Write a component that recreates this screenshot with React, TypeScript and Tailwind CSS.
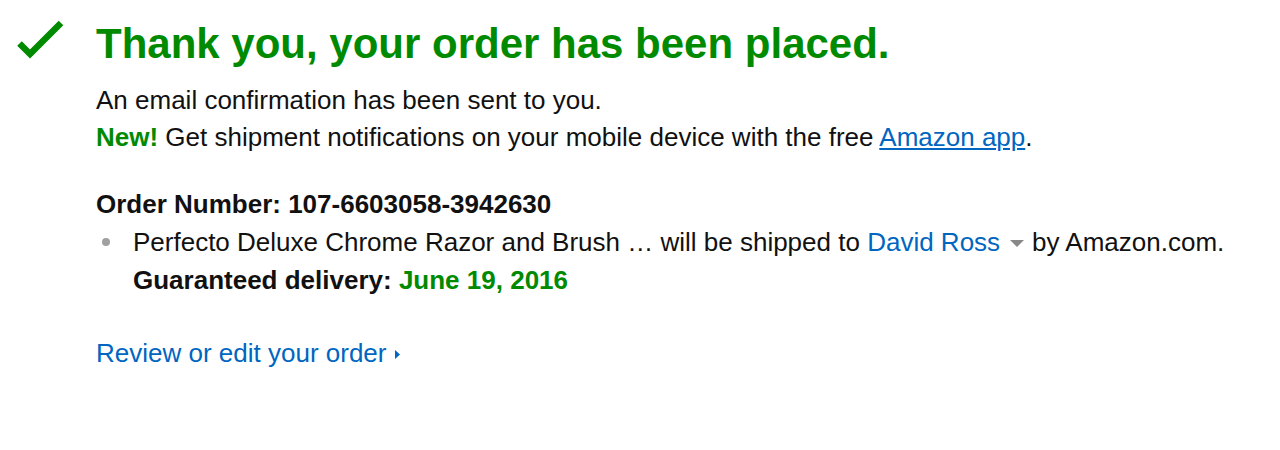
import React from "react";

export default function App() {
  return (
    <div className="w-[1280px] h-[450px] bg-white text-[#111111]" style={{ fontFamily: '"Liberation Sans", Arial, sans-serif' }}>
      <div className="flex pt-[18px] pl-[16px]">
        <div className="w-[80px] shrink-0">
          <svg width="50" height="44" viewBox="0 0 50 44">
            <path d="M3.5 25.5 L14 36 L45 5" fill="none" stroke="#008a00" strokeWidth="6.5" />
          </svg>
        </div>
        <div className="flex flex-col">
          <h1 className="text-[42px] leading-[52px] font-bold text-[#008a00] whitespace-nowrap">Thank you, your order has been placed.</h1>
          <p className="text-[26px] leading-[37px] mt-[12px] whitespace-nowrap">An email confirmation has been sent to you.</p>
          <p className="text-[26px] leading-[37px] whitespace-nowrap">
            <span className="font-bold text-[#008a00]">New!</span> Get shipment notifications on your mobile device with the free{" "}
            <a className="text-[#0066c0] underline">Amazon app</a>.
          </p>
          <p className="text-[26px] leading-[37px] font-bold mt-[30px] whitespace-nowrap">Order Number: 107-6603058-3942630</p>
          <div className="flex items-start text-[26px] leading-[38px]">
            <div className="w-[37px] h-[38px] shrink-0 flex items-center pl-[6px]">
              <div className="w-[8px] h-[8px] rounded-full bg-[#a0a0a0]" />
            </div>
            <div className="flex flex-col">
              <span className="whitespace-nowrap">
                Perfecto Deluxe Chrome Razor and Brush … will be shipped to{" "}
                <span className="text-[#0066c0]">David Ross</span>
                <svg className="inline-block ml-[10px] mr-[8px] align-[4px]" width="14" height="7" viewBox="0 0 14 7">
                  <path d="M0 0 L14 0 L7 7 Z" fill="#888888" />
                </svg>
                by Amazon.com.
              </span>
              <span className="font-bold whitespace-nowrap">
                Guaranteed delivery: <span className="text-[#008a00]">June 19, 2016</span>
              </span>
            </div>
          </div>
          <a className="text-[26px] leading-[37px] text-[#0066c0] mt-[36px] flex items-center whitespace-nowrap">
            Review or edit your order
            <svg className="ml-[9px] mt-[2px]" width="5" height="9" viewBox="0 0 5 9">
              <path d="M0 0 L5 4.5 L0 9 Z" fill="#0066c0" />
            </svg>
          </a>
        </div>
      </div>
    </div>
  );
}
